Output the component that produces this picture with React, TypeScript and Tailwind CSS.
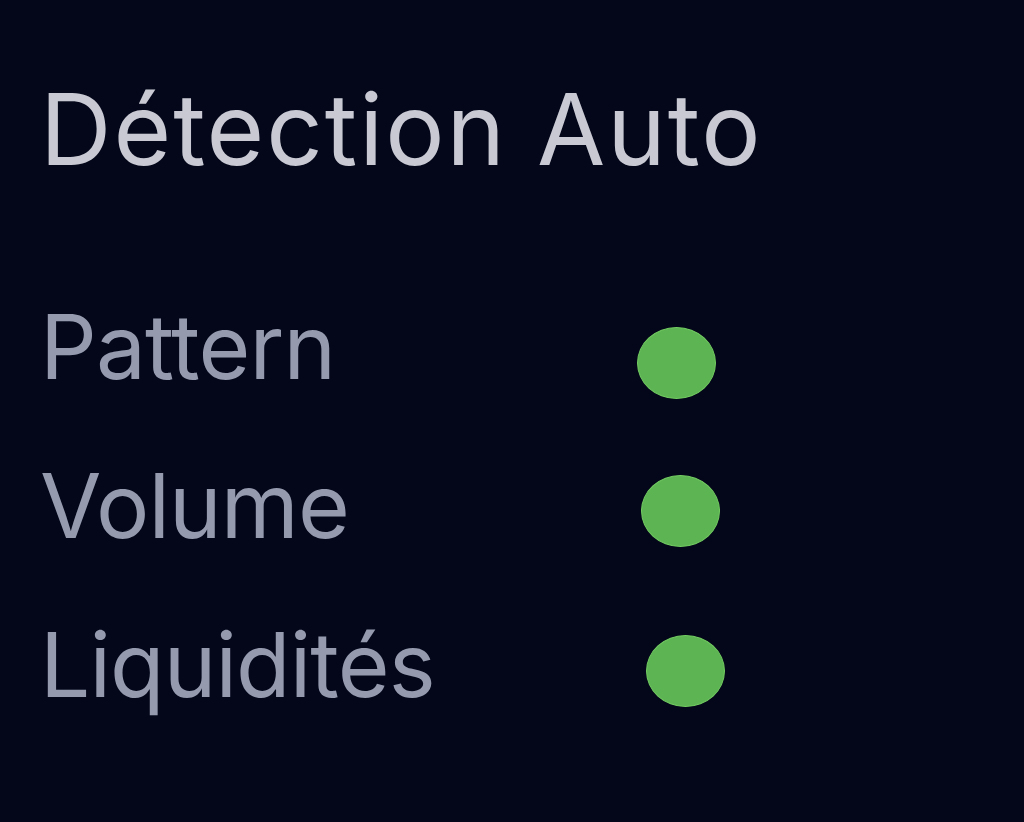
import React from "react";

const rows = [
  { label: "Pattern", pos: "top-[60px] left-[597px]" },
  { label: "Volume", pos: "top-[49px] left-[601px]" },
  { label: "Liquidités", pos: "top-[50px] left-[606px]" },
];

export default function App() {
  return (
    <div className="w-[1024px] h-[822px] bg-[#04071a] overflow-hidden font-['Inter',sans-serif] pl-[40px] pt-[80px]">
      <h1 className="text-[99px] leading-[99px] text-[#c8c9d2] font-normal tracking-[2px]">
        Détection Auto
      </h1>
      <div className="mt-[88px] flex flex-col">
        {rows.map((r) => (
          <div key={r.label} className="relative h-[159px] flex items-center">
            <span className="text-[89px] leading-[159px] text-[#959aae] tracking-[-0.9px]">
              {r.label}
            </span>
            <span
              className={`absolute ${r.pos} w-[79px] h-[72px] rounded-[50%] bg-[#5db453] border border-[#72cc61]`}
            />
          </div>
        ))}
      </div>
    </div>
  );
}
